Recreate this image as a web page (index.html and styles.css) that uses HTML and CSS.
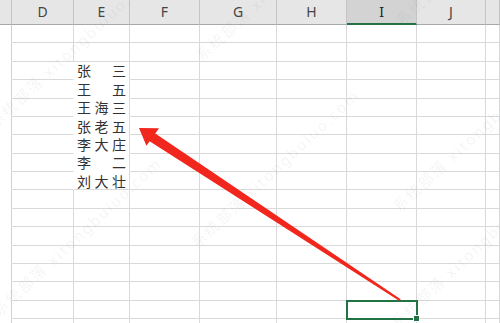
FILE: index.html
```html
<!DOCTYPE html>
<html lang="zh-CN">
<head>
    <meta charset="UTF-8">
    <title>工作表</title>
    <link rel="stylesheet" href="styles.css">
</head>
<body>
    <div class="sheet" id="sheet"></div>

    <!-- pointer drawn over the grid -->
    <svg class="arrow" width="500" height="323" viewBox="0 0 500 323">
        <polygon points="139,128 159,128.3 155.3,133.4 400.7,299.3 399.5,300.9 149.6,141.2 146.4,145.8" fill="#f1261d"/>
    </svg>

    <!-- watermark -->
    <div class="mark m1">系统部落 xitongbuluo.com</div>
    <div class="mark m2">系统部落 xitongbuluo.com</div>
    <div class="mark m3">系统部落 xitongbuluo.com</div>
    <div class="mark m4">系统部落 xitongbuluo.com</div>
    <div class="mark m5">系统部落 xitongbuluo.com</div>
    <div class="mark m6">系统部落 xitongbuluo.com</div>
    <div class="mark m7">系统部落 xitongbuluo.com</div>
    <div class="mark m8">系统部落 xitongbuluo.com</div>

    <script>
        // Column letters, first slot is the row-number column
        const cols = ['', 'D', 'E', 'F', 'G', 'H', 'I', 'J', ''];
        const names = {
            3: ['张', '三'],
            4: ['王', '五'],
            5: ['王', '海', '三'],
            6: ['张', '老', '五'],
            7: ['李', '大', '庄'],
            8: ['李', '二'],
            9: ['刘', '大', '壮']
        };
        const sheet = document.getElementById('sheet');

        cols.forEach((c, i) => {
            const head = document.createElement('div');
            head.className = 'col-head' + (c === 'I' ? ' selected' : '');
            head.textContent = c;
            sheet.appendChild(head);
        });

        for (let r = 1; r <= 17; r++) {
            cols.forEach((c, i) => {
                const cell = document.createElement('div');
                cell.className = 'cell';
                if (i === 0) cell.classList.add('row-head');
                if (c === 'D' && names[r]) cell.classList.add('no-right');
                if (c === 'E' && names[r]) {
                    cell.classList.add('name');
                    if (r < 9) cell.classList.add('no-bottom');
                    names[r].forEach(ch => {
                        const s = document.createElement('span');
                        s.textContent = ch;
                        cell.appendChild(s);
                    });
                }
                if (c === 'I' && r === 16) cell.classList.add('active');
                sheet.appendChild(cell);
            });
        }
    </script>
</body>
</html>
```

FILE: styles.css
```css
:root {
    --grid-line: #d9d9d9;
    --head-bg: #e6e6e6;
    --head-line: #c4c4c4;
    --excel-green: #217346;
}

body {
    margin: 0;
    width: 500px;
    height: 323px;
    overflow: hidden;
    position: relative;
    background: #fff;
    font-family: "Noto Sans", "Noto Sans CJK SC", sans-serif;
}

.sheet {
    display: grid;
    grid-template-columns: 12px 62px 56px 70px 77px 70px 70px 69px 1fr;
    grid-template-rows: 25px repeat(17, 18.375px);
}

.col-head {
    box-sizing: border-box;
    background: var(--head-bg);
    border-right: 1px solid var(--head-line);
    border-bottom: 1px solid #a8a8a8;
    color: #444;
    font-size: 14px;
    line-height: 24px;
    text-align: center;
}

.col-head.selected {
    background: #d3d3d3;
    border-bottom: 2px solid var(--excel-green);
    line-height: 23px;
    color: #222;
}

.cell {
    box-sizing: border-box;
    border-right: 1px solid var(--grid-line);
    border-bottom: 1px solid var(--grid-line);
}

.cell.row-head {
    border-bottom-color: transparent;
    border-right-color: #d0d0d0;
}

.cell.no-right {
    border-right-color: #fff;
}

.cell.no-bottom {
    border-bottom-color: #fff;
}

.cell.name {
    display: flex;
    justify-content: space-between;
    align-items: center;
    padding: 0 3px;
    font-family: "Noto Sans CJK SC", sans-serif;
    font-size: 14px;
    color: #333;
    line-height: 1;
}

.cell.active {
    position: relative;
    outline: 2px solid var(--excel-green);
    outline-offset: -1px;
    z-index: 2;
}

/* fill handle */
.cell.active::after {
    content: "";
    position: absolute;
    right: -4px;
    bottom: -4px;
    width: 5px;
    height: 5px;
    background: var(--excel-green);
    border: 1px solid #fff;
}

.arrow {
    position: absolute;
    left: 0;
    top: 0;
    z-index: 3;
}

.mark {
    position: absolute;
    z-index: 4;
    height: 20px;
    line-height: 20px;
    font-family: "Noto Sans", "Noto Sans CJK SC", sans-serif;
    font-size: 15px;
    letter-spacing: 2px;
    white-space: nowrap;
    color: rgba(110, 110, 110, 0.08);
    transform-origin: 0 100%;
    transform: rotate(-43deg);
    pointer-events: none;
}

.m1 { left: -2px; top: 112px; }
.m2 { left: 2px; top: 300px; }
.m3 { left: 200px; top: 232px; }
.m4 { left: 205px; top: 45px; }
.m5 { left: 402px; top: 196px; }
.m6 { left: 405px; top: 10px; }
.m7 { left: 400px; top: 312px; }
.m8 { left: -8px; top: -70px; }
```
